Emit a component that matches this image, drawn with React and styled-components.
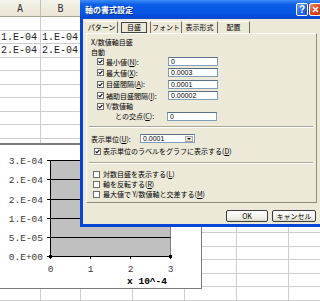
import React from 'react';
import styled, { createGlobalStyle } from 'styled-components';

const GlobalStyle = createGlobalStyle`
  html, body {
    margin: 0;
    padding: 0;
    background: #fff;
  }
  body {
    width: 320px;
    height: 301px;
    overflow: hidden;
  }
`;

const Screen = styled.div`
  position: relative;
  width: 320px;
  height: 301px;
  overflow: hidden;
  background: #fff;
  font-family: "Noto Sans CJK JP", "Liberation Sans", sans-serif;
`;

// ---- spreadsheet ----

const Sheet = styled.div`
  display: grid;
  grid-template-columns: 41px 40px repeat(5, 52px);
  grid-template-rows: 17px;
  grid-auto-rows: 13.5px;
`;

const HeadCell = styled.div`
  box-sizing: border-box;
  background: linear-gradient(#f5f3ea, #e9e5d6);
  border-right: 1px solid #c5c1b0;
  border-bottom: 1px solid #a8a492;
  display: flex;
  align-items: center;
  justify-content: center;
  font: 10px "DejaVu Sans Mono", monospace;
  color: #333;
`;

const Cell = styled.div`
  box-sizing: border-box;
  border-right: 1px solid #cdcdcd;
  border-bottom: 1px solid #cdcdcd;
  font: 10px "Liberation Mono", monospace;
  line-height: 13px;
  padding-left: 1px;
  color: #222;
  white-space: nowrap;
  overflow: hidden;
`;

// ---- embedded chart ----

const ChartBox = styled.div`
  position: absolute;
  left: -1px;
  top: 143px;
  width: 203px;
  height: 146px;
  box-sizing: border-box;
  background: #fff;
  border: 1px solid #7c7c7c;
  border-top-width: 2px;
`;

const ChartSvg = styled.svg`
  display: block;
  font-family: "Liberation Mono", monospace;
`;

// ---- dialog ----

const Dialog = styled.div`
  position: absolute;
  left: 80px;
  top: 0;
  width: 244px;
  height: 227px;
  box-sizing: border-box;
  background: #0845d6;
  padding: 0 3px 3px 3px;
  display: flex;
  flex-direction: column;
  font-size: 7px;
  color: #000;
`;

const TitleBar = styled.div`
  height: 19px;
  margin: 0 -3px;
  padding: 0 3px 0 5px;
  display: flex;
  align-items: center;
  background: linear-gradient(#3d8bf7, #0b5de8 25%, #0556e4 70%, #0246cf);
`;

const Title = styled.div`
  flex: 1;
  color: #fff;
  font-weight: 700;
  font-size: 8px;
  text-shadow: 1px 1px 0 #0a2c8a;
`;

const CapButton = styled.div`
  width: 12px;
  height: 13px;
  margin-left: 1px;
  box-sizing: border-box;
  border: 1px solid #fff;
  border-radius: 2px;
  background: ${p => (p.$close
    ? 'linear-gradient(135deg, #f0906a, #d9451c 55%, #c23a12)'
    : 'linear-gradient(135deg, #6fa2fb, #2667e8 55%, #1a52cf)')};
  display: flex;
  align-items: center;
  justify-content: center;
  color: #fff;
  font: 700 10px "Liberation Sans", sans-serif;
`;

const Body = styled.div`
  flex: 1;
  background: #ece9d8;
  padding: 2px 4px 0 3px;
  display: flex;
  flex-direction: column;
`;

const TabStrip = styled.div`
  height: 12px;
  display: flex;
  align-items: stretch;
`;

const Tab = styled.div`
  width: ${p => p.$w}px;
  box-sizing: border-box;
  display: flex;
  align-items: center;
  justify-content: center;
  border-right: 1px solid #6f6d62;
  border-top: 1px solid #fff;
  line-height: 1;
`;

const FocusBox = styled.span`
  padding: 1px 5px;
  border: 1px solid #444;
`;

const Panel = styled.div`
  height: 170px;
  box-sizing: border-box;
  border: 1px solid;
  border-color: #fff #8f8c7e #8f8c7e #fff;
  display: flex;
  flex-direction: column;
`;

const Line = styled.div`
  height: ${p => p.$h}px;
  margin-top: ${p => p.$mt || 0}px;
  padding-left: ${p => p.$pl || 4}px;
  display: flex;
  align-items: center;
  white-space: nowrap;
`;

const Label = styled.span`
  width: ${p => (p.$w ? `${p.$w}px` : 'auto')};
  flex: none;
`;

const Check = styled.span`
  width: 7px;
  height: 7px;
  margin-right: ${p => p.$mr || 2}px;
  box-sizing: border-box;
  border: 1px solid #6d6d6d;
  background: #fff;
  flex: none;
  display: flex;
`;

const Field = styled.div`
  width: ${p => p.$w}px;
  height: 9px;
  box-sizing: border-box;
  border: 1px solid #7f9db9;
  border-top-color: #5b6e84;
  background: #fff;
  padding-left: 2px;
  display: flex;
  align-items: center;
  font-family: "Liberation Sans", sans-serif;
  font-size: 7px;
`;

const Combo = styled(Field)`
  padding-right: 1px;
  justify-content: space-between;
`;

const DropBtn = styled.span`
  width: 8px;
  height: 6px;
  box-sizing: border-box;
  border: 1px solid #a8a8a8;
  background: #ece9d8;
  display: flex;
  align-items: center;
  justify-content: center;
`;

const Separator = styled.div`
  height: 0;
  margin: ${p => p.$mt}px 3px 0 2px;
  border-top: 1px solid #aca899;
  border-bottom: 1px solid #fff;
`;

const Footer = styled.div`
  height: 12px;
  margin-top: 7px;
  display: flex;
  justify-content: flex-end;
  gap: 4px;
  padding-right: 1px;
`;

const Button = styled.div`
  width: ${p => p.$w}px;
  box-sizing: border-box;
  border: 1px solid #3c3c3c;
  border-radius: 2px;
  background: linear-gradient(#fefefd, #f1efe6 70%, #dcd8c8);
  display: flex;
  align-items: center;
  justify-content: center;
  font-size: 7px;
`;

const Tick = () => (
  <svg width="5" height="5" viewBox="0 0 5 5">
    <path d="M0.6 2.4 L1.9 3.8 L4.4 0.9" fill="none" stroke="#000" strokeWidth="1.1" />
  </svg>
);

const CheckBox = ({ on, mr }) => <Check $mr={mr}>{on && <Tick />}</Check>;

// only A and B headers are visible, the rest sit under the dialog
const cols = ['A', 'B', '', '', '', '', ''];
const data = { 1: ['1.E-04', '1.E-04'], 2: ['2.E-04', '2.E-04'] };

const tabs = [
  { t: 'パターン', w: 32 },
  { t: '目盛', w: 33, on: true },
  { t: 'フォント', w: 31 },
  { t: '表示形式', w: 36 },
  { t: '配置', w: 32 },
];

const scale = [
  { label: <>最小値(<u>N</u>):</>, value: '0' },
  { label: <>最大値(<u>X</u>):</>, value: '0.0003' },
  { label: <>目盛間隔(<u>A</u>):</>, value: '0.0001' },
  { label: <>補助目盛間隔(<u>I</u>):</>, value: '0.00002' },
];

const yLabels = ['3.E-04', '2.E-04', '2.E-04', '1.E-04', '5.E-05', '0.E+00'];
const gridY = [15.5, 34.5, 54.5, 73.5, 92.5, 111.5];
const xTicks = [50.5, 90.5, 130.5, 170.5];

function Chart() {
  return (
    <ChartBox>
      <ChartSvg width="201" height="143" viewBox="0 0 201 143">
        <rect x="50.5" y="15.5" width="120" height="96" fill="#c0c0c0" stroke="#808080" />
        {gridY.map(y => (
          <line key={y} x1="47" x2="170.5" y1={y} y2={y} stroke="#000" />
        ))}
        <line x1="50.5" x2="50.5" y1="15" y2="112" stroke="#000" />
        {xTicks.map(x => (
          <line key={x} x1={x} x2={x} y1="111.5" y2="114" stroke="#000" />
        ))}
        <rect x="49" y="110" width="3" height="3" fill="#000" />
        <rect x="169" y="110" width="3" height="3" fill="#000" />
        {yLabels.map((t, i) => (
          <text key={i} x="43" y={gridY[i] + 3} fontSize="9.5" textAnchor="end" fill="#3a3a3a">{t}</text>
        ))}
        {xTicks.map((x, i) => (
          <text key={x} x={x} y="127" fontSize="9.5" textAnchor="middle" fill="#3a3a3a">{i}</text>
        ))}
        <text x="147" y="139" fontSize="9.5" fontWeight="700" textAnchor="middle" fill="#000">x 10^-4</text>
      </ChartSvg>
    </ChartBox>
  );
}

export default function App() {
  return (
    <>
      <GlobalStyle />
      <Screen>
        <Sheet>
          {cols.map((c, i) => <HeadCell key={i}>{c}</HeadCell>)}
          {Array.from({ length: 21 }, (_, r) =>
            cols.map((c, i) => (
              <Cell key={`${r}-${i}`}>{(data[r] && data[r][i]) || ''}</Cell>
            ))
          )}
        </Sheet>

        <Chart />

        <Dialog>
          <TitleBar>
            <Title>軸の書式設定</Title>
            <CapButton>?</CapButton>
            <CapButton $close>
              <svg width="7" height="7" viewBox="0 0 7 7">
                <path d="M1 1 L6 6 M6 1 L1 6" stroke="#fff" strokeWidth="1.6" />
              </svg>
            </CapButton>
          </TitleBar>
          <Body>
            <TabStrip>
              {tabs.map(tab => (
                <Tab key={tab.t} $w={tab.w}>
                  {tab.on ? <FocusBox>{tab.t}</FocusBox> : tab.t}
                </Tab>
              ))}
            </TabStrip>
            <Panel>
              <Line $h={10} $mt={3}>X/数値軸目盛</Line>
              <Line $h={9}>自動</Line>
              {scale.map((s, i) => (
                <Line key={i} $h={11.3} $pl={10}>
                  <CheckBox on />
                  <Label $w={62}>{s.label}</Label>
                  <Field $w={50}>{s.value}</Field>
                </Line>
              ))}
              <Line $h={10} $pl={10}>
                <CheckBox on />
                <Label>Y/数値軸</Label>
              </Line>
              <Line $h={10.5} $pl={28}>
                <Label $w={52}>との交点(<u>C</u>):</Label>
                <Field $w={50}>0</Field>
              </Line>
              <Separator $mt={4} />
              <Line $h={10} $mt={6}>
                <Label $w={49}>表示単位(<u>U</u>):</Label>
                <Combo $w={55}>
                  0.0001
                  <DropBtn>
                    <svg width="4" height="2" viewBox="0 0 4 2"><path d="M0 0 H4 L2 2 Z" fill="#000" /></svg>
                  </DropBtn>
                </Combo>
              </Line>
              <Line $h={10} $mt={2.5} $pl={7}>
                <CheckBox on />
                <Label>表示単位のラベルをグラフに表示する(<u>D</u>)</Label>
              </Line>
              <Separator $mt={5.8} />
              <Line $h={10} $mt={5.5} $pl={6}>
                <CheckBox mr={3} />
                <Label>対数目盛を表示する(<u>L</u>)</Label>
              </Line>
              <Line $h={10} $pl={6}>
                <CheckBox mr={3} />
                <Label>軸を反転する(<u>R</u>)</Label>
              </Line>
              <Line $h={10} $pl={6}>
                <CheckBox mr={3} />
                <Label>最大値で Y/数値軸と交差する(<u>M</u>)</Label>
              </Line>
            </Panel>
            <Footer>
              <Button $w={42}>OK</Button>
              <Button $w={44}>キャンセル</Button>
            </Footer>
          </Body>
        </Dialog>
      </Screen>
    </>
  );
}
